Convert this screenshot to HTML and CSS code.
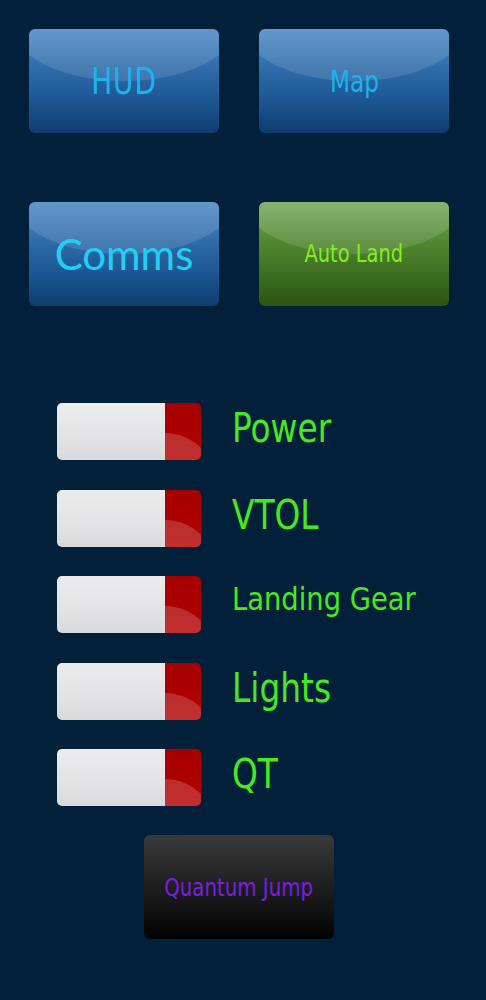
FILE: index.html
```html
<!DOCTYPE html>
<html>
<head>
<meta charset="utf-8">
<link rel="stylesheet" href="styles.css">
</head>
<body>
<div class="page">
  <div class="grid">
    <div class="btn blue"><span class="t-hud">HUD</span></div>
    <div class="btn blue"><span class="t-map">Map</span></div>
    <div class="btn blue"><span class="t-comms">Comms</span></div>
    <div class="btn green"><span class="t-auto">Auto Land</span></div>
  </div>
  <div class="toggles">
    <div class="row"><div class="toggle"><div class="knob"></div><div class="red"></div></div><span class="label">Power</span></div>
    <div class="row"><div class="toggle"><div class="knob"></div><div class="red"></div></div><span class="label">VTOL</span></div>
    <div class="row"><div class="toggle"><div class="knob"></div><div class="red"></div></div><span class="label small">Landing Gear</span></div>
    <div class="row"><div class="toggle"><div class="knob"></div><div class="red"></div></div><span class="label">Lights</span></div>
    <div class="row"><div class="toggle"><div class="knob"></div><div class="red"></div></div><span class="label">QT</span></div>
  </div>
  <div class="qrow">
    <div class="btn black"><span class="t-qj">Quantum Jump</span></div>
  </div>
</div>
</body>
</html>
```
FILE: styles.css
```css
html, body {
  margin: 0;
  padding: 0;
  background: #03203a;
}
body {
  width: 486px;
  height: 1000px;
  overflow: hidden;
  font-family: "DejaVu Sans Condensed", "DejaVu Sans", sans-serif;
}
.page {
  padding: 29px 0 0 29px;
}
.grid {
  display: grid;
  grid-template-columns: 190px 190px;
  column-gap: 40px;
  row-gap: 69px;
}
.btn {
  position: relative;
  height: 104px;
  width: 190px;
  border-radius: 6px;
  overflow: hidden;
  display: flex;
  align-items: center;
  justify-content: center;
}
.btn span {
  position: relative;
  z-index: 1;
  display: inline-block;
  white-space: nowrap;
}
.blue {
  background: linear-gradient(to bottom, #4f8ac6 0%, #2d6aa8 40%, #1c5592 70%, #0d3d6e 100%);
}
.green {
  background: linear-gradient(to bottom, #78aa5c 0%, #50852f 40%, #3d6e20 70%, #2b5410 100%);
}
.black {
  background: linear-gradient(to bottom, #3a3a3a 0%, #232323 40%, #111 75%, #000 100%);
}
.blue::before, .green::before {
  content: "";
  position: absolute;
  left: -18px;
  width: 226px;
  top: -62px;
  height: 114px;
  border-radius: 50%;
  background: rgba(255, 255, 255, 0.12);
}
.t-hud {
  color: #19b4ef;
  font-size: 37px;
  letter-spacing: 1px;
  transform: scaleX(0.84);
}
.t-map {
  color: #19b4ef;
  font-size: 30px;
  transform: scaleX(0.86);
}
.t-comms {
  color: #1fd0f2;
  font-family: Lato, "Open Sans", sans-serif;
  font-size: 42px;
}
.t-auto {
  color: #84ee1e;
  font-size: 24px;
  transform: scaleX(0.9);
}
.t-qj {
  color: #7a1fe0;
  font-size: 25px;
  transform: scaleX(0.88);
}
.toggles {
  margin-top: 97px;
  padding-left: 28px;
  display: flex;
  flex-direction: column;
  gap: 29.5px;
}
.row {
  display: flex;
  align-items: center;
  height: 57px;
  gap: 31px;
}
.toggle {
  position: relative;
  width: 144px;
  height: 57px;
  border-radius: 5px;
  overflow: hidden;
  display: flex;
  flex: none;
}
.knob {
  width: 108px;
  height: 100%;
  background: linear-gradient(to bottom, #ececee 0%, #e3e3e5 60%, #d9d9db 100%);
}
.red {
  position: relative;
  flex: 1;
  height: 100%;
  background: linear-gradient(to bottom, #a60000 0%, #b30000 100%);
  overflow: hidden;
}
.red::before {
  content: "";
  position: absolute;
  left: -55px;
  width: 110px;
  top: 30px;
  height: 120px;
  border-radius: 50%;
  background: rgba(255, 255, 255, 0.18);
}
.label {
  display: inline-block;
  white-space: nowrap;
  color: #46ea1e;
  font-size: 41px;
  line-height: 1;
  margin-top: -6px;
  transform: scaleX(0.89);
  transform-origin: left center;
}
.label.small {
  font-size: 32px;
  margin-top: -12px;
  transform: scaleX(0.95);
}
.qrow {
  margin-top: 29px;
  padding-left: 115px;
}
```
